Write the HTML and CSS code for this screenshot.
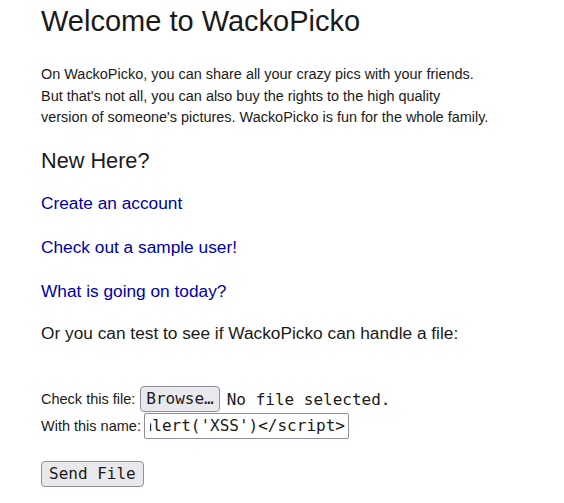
FILE: index.html
```html
<!DOCTYPE html>
<html>
<head>
<meta charset="utf-8">
<link rel="stylesheet" href="styles.css">
<title>WackoPicko</title>
</head>
<body>
<div class="page">
  <h1 class="title">Welcome to WackoPicko</h1>
  <p class="intro">On WackoPicko, you can share all your crazy pics with your friends.<br>But that's not all, you can also buy the rights to the high quality<br>version of someone's pictures. WackoPicko is fun for the whole family.</p>
  <h2 class="sub">New Here?</h2>
  <div class="links">
    <p class="link-row"><a href="#">Create an account</a></p>
    <p class="link-row"><a href="#">Check out a sample user!</a></p>
    <p class="link-row"><a href="#">What is going on today?</a></p>
  </div>
  <p class="test">Or you can test to see if WackoPicko can handle a file:</p>
  <form class="upload">
    <div class="row">
      <span class="label">Check this file:</span>
      <span class="btn browse">Browse…</span>
      <span class="nofile">No file selected.</span>
    </div>
    <div class="row">
      <span class="label">With this name:</span>
      <span class="textbox"><span class="clip"><span class="val">&lt;script&gt;alert('XSS')&lt;/script&gt;</span></span></span>
    </div>
    <div class="send-row">
      <span class="btn send">Send File</span>
    </div>
  </form>
</div>
</body>
</html>
```
FILE: styles.css
```css
html, body {
  margin: 0;
  padding: 0;
  background: #fff;
}
body {
  font-family: "Liberation Sans", Arial, sans-serif;
  color: #1a1a1a;
}
.page {
  padding-left: 41px;
  width: 480px;
}
.title {
  font-size: 29px;
  font-weight: normal;
  margin: 0;
  padding-top: 5px;
  line-height: 32px;
}
.intro {
  font-size: 14.45px;
  line-height: 21.5px;
  margin: 27px 0 0 0;
}
.sub {
  font-size: 21.7px;
  font-weight: normal;
  margin: 20px 0 0 0;
  line-height: 24px;
}
.links {
  margin-top: 8px;
}
.link-row {
  font-size: 17.3px;
  margin: 0;
  line-height: 44px;
}
.link-row a {
  color: #0000a8;
  text-decoration: none;
}
.test {
  font-size: 17.3px;
  margin: 0;
  line-height: 40px;
}
.upload {
  margin-top: 33px;
  font-size: 14.5px;
}
.row {
  display: flex;
  align-items: center;
  height: 27px;
}
.label {
  margin-right: 3px;
}
.btn {
  font-family: "DejaVu Sans Mono", monospace;
  font-size: 16px;
  color: #1a1a1a;
  background: #e9e9ed;
  border: 1px solid #8f8f9d;
  border-radius: 4px;
  height: 24px;
  line-height: 24px;
  display: inline-block;
}
.browse {
  padding: 0 5px;
  margin-left: 2px;
}
.send {
  padding: 0 7px;
}
.nofile {
  font-family: "DejaVu Sans Mono", monospace;
  font-size: 16px;
  margin-left: 7px;
}
.textbox {
  display: block;
  box-sizing: border-box;
  width: 205px;
  height: 26px;
  border: 1px solid #8f8f9d;
  border-radius: 2px;
  padding: 0 3px 0 5px;
  font-family: "DejaVu Sans Mono", monospace;
  font-size: 16px;
  line-height: 24px;
}
.clip {
  display: flex;
  justify-content: flex-end;
  overflow: hidden;
  width: 100%;
  height: 100%;
}
.val {
  white-space: nowrap;
  flex: none;
}
.send-row {
  margin-top: 21px;
}
```
